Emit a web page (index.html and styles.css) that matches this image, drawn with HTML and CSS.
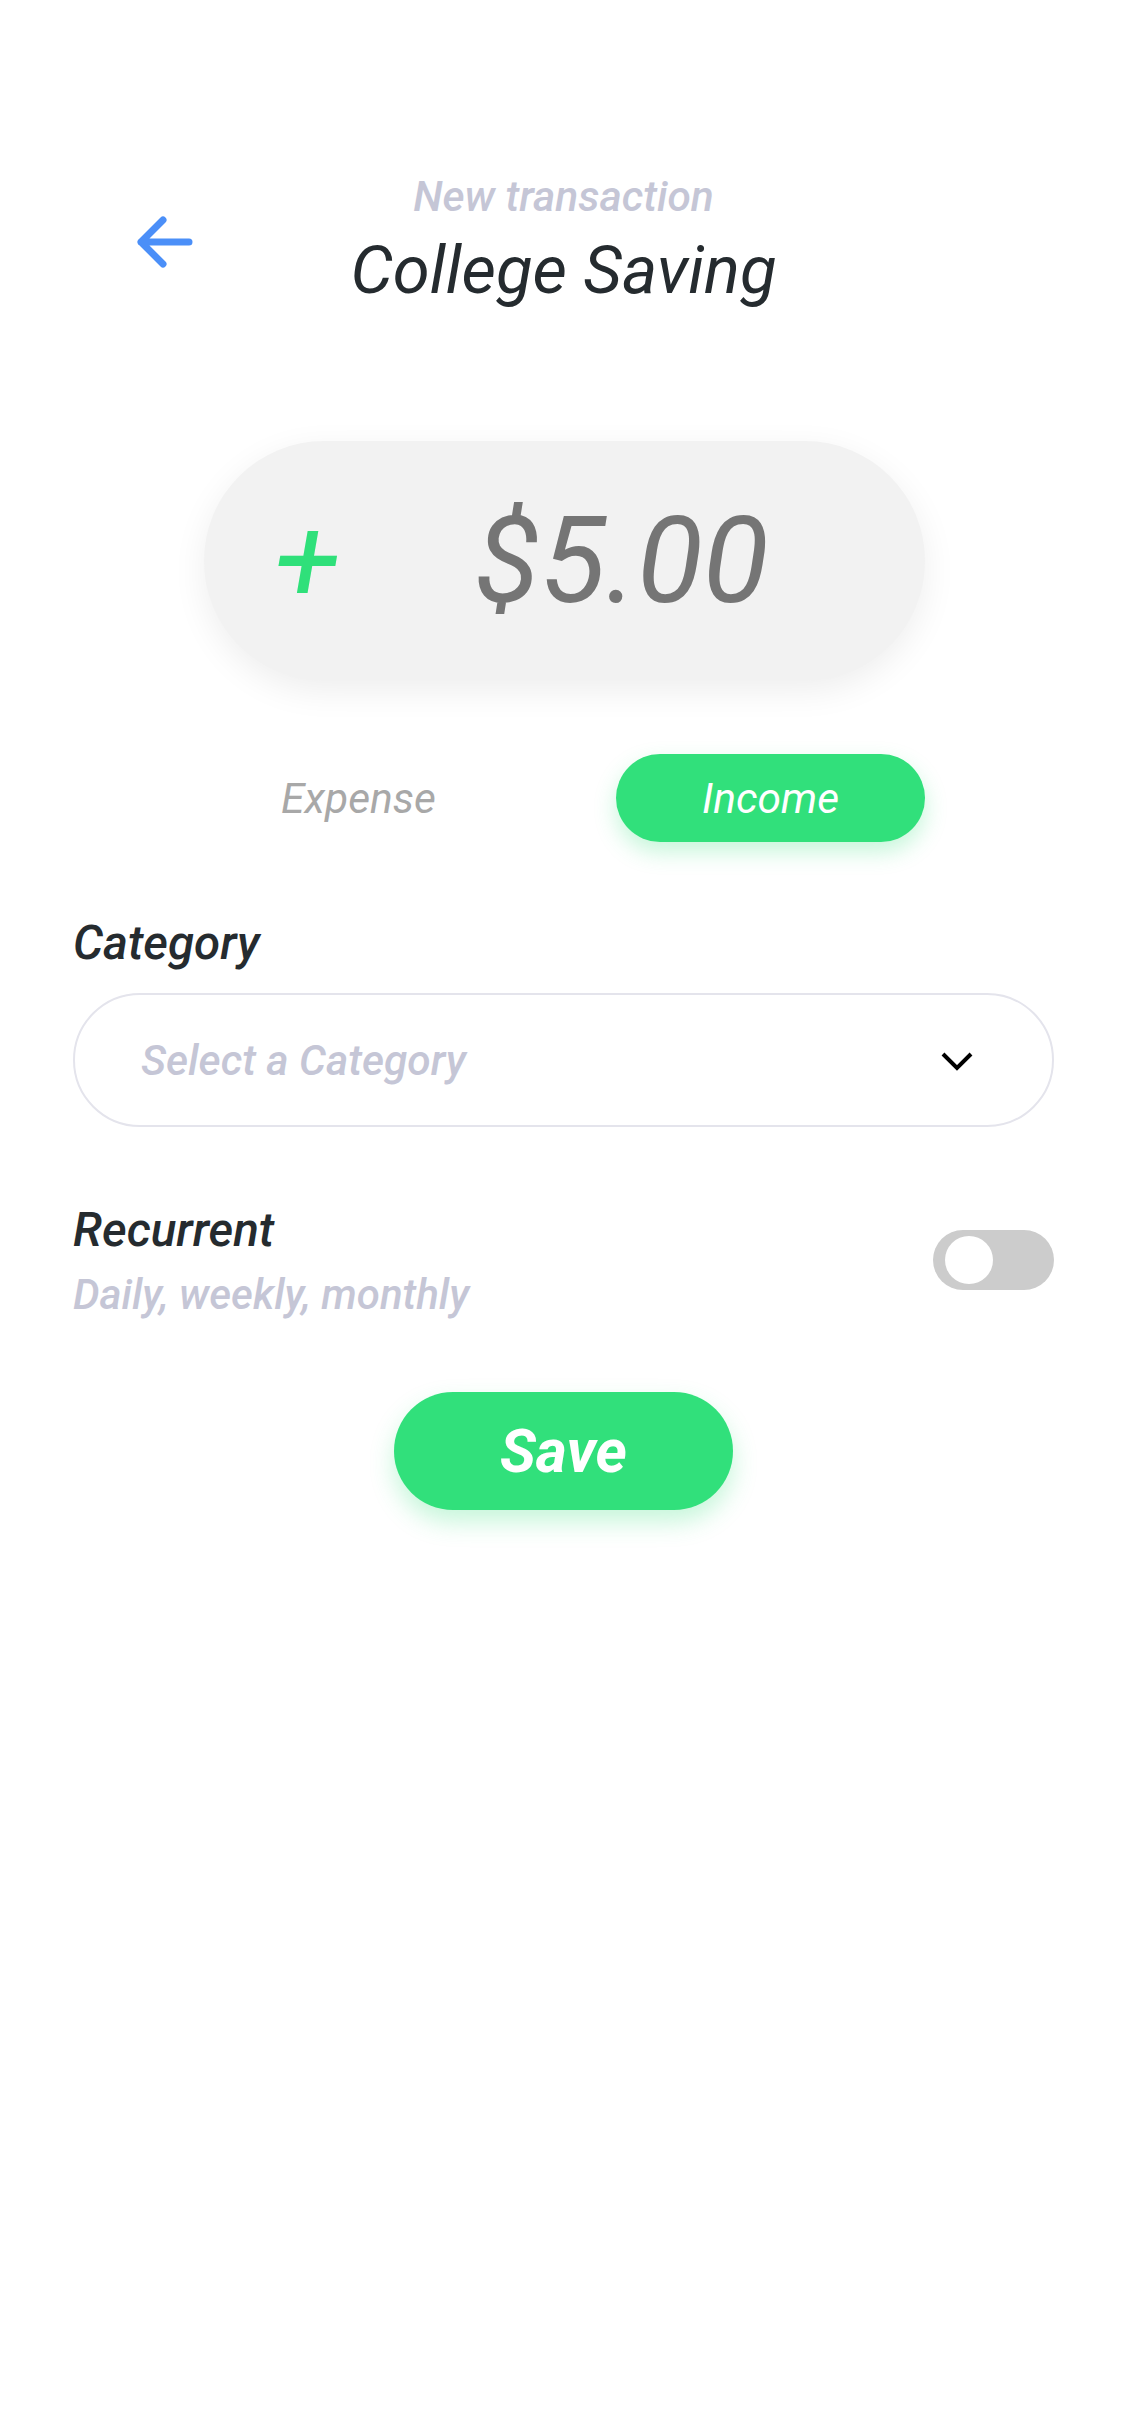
FILE: index.html
```html
<!DOCTYPE html>
<html lang="en">
<head>
<meta charset="utf-8">
<title>New transaction</title>
<link rel="stylesheet" href="styles.css">
</head>
<body>
<main class="page">
  <header class="header">
    <button class="back" aria-label="Back">
      <svg width="56" height="52" viewBox="0 0 56 52"><path d="M26 4 L4 26 L26 48 M4 26 H52" fill="none" stroke="#4b8ff8" stroke-width="7" stroke-linecap="round" stroke-linejoin="round"/></svg>
    </button>
    <div class="titles">
      <div class="subtitle">New transaction</div>
      <h1 class="title">College Saving</h1>
    </div>
    <div></div>
  </header>

  <section class="amount">
    <span class="sign">+</span>
    <span class="value">$5.00</span>
  </section>

  <div class="type-row">
    <div class="type">Expense</div>
    <div class="type type-active">Income</div>
  </div>

  <label class="label">Category</label>
  <div class="select">
    <span class="placeholder">Select a Category</span>
    <svg class="chevron" width="34" height="20" viewBox="0 0 34 20"><path d="M3 3 L17 17 L31 3" fill="none" stroke="#000" stroke-width="4"/></svg>
  </div>

  <div class="recurrent">
    <div class="rec-text">
      <div class="label rec-label">Recurrent</div>
      <div class="rec-sub">Daily, weekly, monthly</div>
    </div>
    <div class="switch"><div class="knob"></div></div>
  </div>

  <div class="save-wrap">
    <button class="save">Save</button>
  </div>
</main>
</body>
</html>
```

FILE: styles.css
```css
* { box-sizing: border-box; }
html, body { margin: 0; padding: 0; background: #ffffff; }
body {
  font-family: Roboto, "Liberation Sans", sans-serif;
  font-style: italic;
  width: 1125px;
  min-height: 2436px;
}
.page {
  padding: 173px 71px 0 73px;
  display: flex;
  flex-direction: column;
}
.header {
  display: grid;
  grid-template-columns: 1fr auto 1fr;
  align-items: center;
}
.back {
  justify-self: start;
  margin-left: 64px;
  padding: 0;
  border: 0;
  background: none;
  display: flex;
  margin-top: 2px;
}
.titles {
  display: flex;
  flex-direction: column;
  align-items: center;
}
.subtitle {
  font-size: 42.5px;
  line-height: 48px;
  font-weight: 500;
  color: #c5c6d6;
}
.title {
  margin: 11px 0 0;
  font-size: 67px;
  line-height: 76px;
  font-weight: 400;
  font-style: italic;
  color: #252b2f;
}
.amount {
  margin: 133px auto 0;
  width: 721px;
  height: 240px;
  border-radius: 120px;
  background: #f2f2f2;
  box-shadow: 0 10px 34px rgba(0, 0, 0, 0.07);
  display: flex;
  align-items: center;
  padding-left: 70px;
  position: relative;
  left: 1px;
}
.sign {
  font-size: 120px;
  line-height: 1;
  color: #2fe07a;
  font-weight: 400;
}
.value {
  margin-left: 134px;
  font-size: 121px;
  line-height: 1;
  color: #757575;
  font-weight: 400;
}
.type-row {
  margin: 73px auto 0;
  width: 721px;
  display: flex;
  justify-content: space-between;
  position: relative;
  left: 1px;
}
.type {
  width: 309px;
  height: 88px;
  border-radius: 44px;
  display: flex;
  align-items: center;
  justify-content: center;
  font-size: 42.5px;
  color: #a8a8a8;
}
.type-active {
  background: #31e07b;
  color: #ffffff;
  box-shadow: 0 10px 22px rgba(49, 224, 123, 0.28);
}
.label {
  margin-top: 75px;
  font-size: 47.5px;
  line-height: 52px;
  font-weight: 500;
  color: #252b2f;
}
.select {
  margin-top: 24px;
  height: 134px;
  border: 2px solid #e4e4ec;
  border-radius: 67px;
  display: flex;
  align-items: center;
  justify-content: space-between;
  padding: 0 78px 0 66px;
}
.placeholder {
  font-size: 42.5px;
  font-weight: 500;
  color: #c5c6d6;
}
.chevron { margin-top: 2px; }
.recurrent {
  margin-top: 77px;
  display: flex;
  align-items: center;
  justify-content: space-between;
}
.rec-label { margin-top: 0; }
.rec-sub {
  margin-top: 16px;
  font-size: 42px;
  line-height: 46px;
  font-weight: 500;
  color: #c5c6d6;
}
.switch {
  width: 121px;
  height: 60px;
  border-radius: 30px;
  background: #cccccc;
  display: flex;
  align-items: center;
  padding-left: 12px;
  margin-bottom: 3px;
}
.knob {
  width: 48px;
  height: 48px;
  border-radius: 50%;
  background: #ffffff;
}
.save-wrap {
  margin-top: 74px;
  display: flex;
  justify-content: center;
}
.save {
  width: 339px;
  height: 118px;
  border: 0;
  border-radius: 59px;
  background: #31e07b;
  color: #ffffff;
  font-family: Roboto, "Liberation Sans", sans-serif;
  font-style: italic;
  font-weight: 700;
  font-size: 60px;
  box-shadow: 0 12px 24px rgba(49, 224, 123, 0.28);
  padding: 0;
}
```
